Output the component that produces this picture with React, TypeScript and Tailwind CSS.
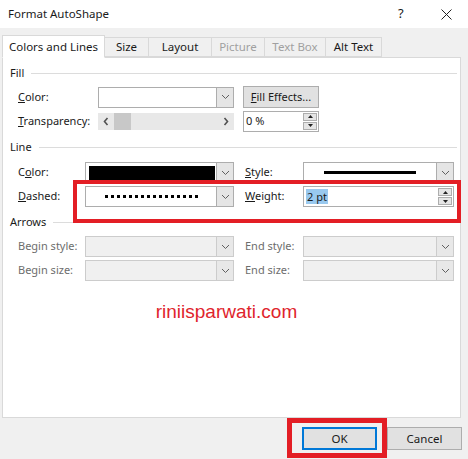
import React from 'react'

const font = { fontFamily: '"Noto Sans", "Open Sans", sans-serif' }

const Chevron = () => (
    <svg width="9" height="6" viewBox="0 0 9 6" fill="none">
        <path d="M1 1l3.5 3.5L8 1" stroke="#606060" strokeWidth="1" />
    </svg>
)

const Combo = ({ width, disabled, children }: { width: string; disabled?: boolean; children?: React.ReactNode }) => (
    <div className={`${width} h-[21px] flex border ${disabled ? 'border-[#cccccc] bg-[#f0f0f0]' : 'border-[#adadad] bg-white'}`}>
        <div className="flex-1 flex items-center">{children}</div>
        <div className={`w-[17px] flex items-center justify-center border-l ${disabled ? 'border-[#cccccc] bg-[#e8e8e8]' : 'border-[#adadad] bg-[#e5e5e5]'}`}>
            <Chevron />
        </div>
    </div>
)

const Spinner = ({ width, children }: { width: string; children: React.ReactNode }) => (
    <div className={`${width} h-[21px] flex border border-[#adadad] bg-white`}>
        <div className="flex-1 flex items-center pl-[2px]">{children}</div>
        <div className="w-[15px] flex flex-col justify-center gap-[1px] pr-[1px]">
            <div className="h-[8px] bg-[#e5e5e5] border border-[#adadad] flex items-center justify-center">
                <svg width="5" height="3" viewBox="0 0 5 3"><path d="M0 3L2.5 0L5 3z" fill="#222" /></svg>
            </div>
            <div className="h-[8px] bg-[#e5e5e5] border border-[#adadad] flex items-center justify-center">
                <svg width="5" height="3" viewBox="0 0 5 3"><path d="M0 0L2.5 3L5 0z" fill="#222" /></svg>
            </div>
        </div>
    </div>
)

const Heading = ({ text }: { text: string }) => (
    <div className="flex items-center h-[16px] pl-[7px] pr-[3px]">
        <span className="text-[#1a1a1a]">{text}</span>
        <div className="flex-1 h-px bg-[#dcdcdc] ml-[7px]" />
    </div>
)

const Tab = ({ label, active, disabled, width }: { label: string; active?: boolean; disabled?: boolean; width: string }) => (
    <div
        className={`${width} flex items-center justify-center border border-[#d9d9d9] ${active ? 'h-[23px] bg-white border-b-white -mb-px z-10' : 'h-[20px] bg-[#f0f0f0] -ml-px'} ${disabled ? 'text-[#a0a0a0]' : 'text-[#1a1a1a]'}`}
    >
        {label}
    </div>
)

export default function App() {
    return (
        <div className="w-[468px] h-[459px] bg-[#f0f0f0] flex flex-col text-[11px] text-[#1a1a1a] relative overflow-hidden" style={font}>
            <div className="h-[28px] bg-white flex items-center pl-[8px] text-[11.5px]">
                <span className="flex-1">Format AutoShape</span>
                <span className="w-[12px] text-[13px] mr-[31px]">?</span>
                <svg width="11" height="11" viewBox="0 0 11 11" className="mr-[16px]">
                    <path d="M0.5 0.5l10 10M10.5 0.5l-10 10" stroke="#222" strokeWidth="1" />
                </svg>
            </div>

            <div className="pl-[2px] pt-[7px]">
                <div className="flex items-end relative text-[11.5px]">
                    <Tab label="Colors and Lines" active width="w-[103px]" />
                    <Tab label="Size" width="w-[45px]" />
                    <Tab label="Layout" width="w-[64px]" />
                    <Tab label="Picture" disabled width="w-[54px]" />
                    <Tab label="Text Box" disabled width="w-[62px]" />
                    <Tab label="Alt Text" width="w-[57px]" />
                </div>
                <div className="w-[459px] h-[361px] bg-white border border-[#d9d9d9] pt-[7px] flex flex-col">
                    <Heading text="Fill" />
                    <div className="flex items-center mt-[5px] h-[22px]">
                        <span className="w-[95px] pl-[15px]"><u>C</u>olor:</span>
                        <Combo width="w-[136px]" />
                        <button className="ml-[9px] w-[76px] h-[22px] bg-[#e1e1e1] border border-[#adadad] flex items-center justify-center">
                            <span><u>F</u>ill Effects...</span>
                        </button>
                    </div>
                    <div className="flex items-center mt-[3px] h-[20px]">
                        <span className="w-[95px] pl-[15px]"><u>T</u>ransparency:</span>
                        <div className="w-[136px] h-[17px] bg-[#e8e8e8] flex items-center">
                            <svg width="16" height="17" viewBox="0 0 16 17"><path d="M9.5 5l-3 3.5 3 3.5" stroke="#505050" strokeWidth="1.6" fill="none" /></svg>
                            <div className="w-[17px] h-[17px] bg-[#c8c8c8]" />
                            <div className="flex-1" />
                            <svg width="16" height="17" viewBox="0 0 16 17"><path d="M6.5 5l3 3.5-3 3.5" stroke="#505050" strokeWidth="1.6" fill="none" /></svg>
                        </div>
                        <div className="ml-[9px]">
                            <Spinner width="w-[76px]">0 %</Spinner>
                        </div>
                    </div>

                    <div className="mt-[8px]">
                        <Heading text="Line" />
                    </div>
                    <div className="flex items-center mt-[7px] h-[21px]">
                        <span className="w-[82px] pl-[15px]">C<u>o</u>lor:</span>
                        <Combo width="w-[149px]">
                            <div className="ml-[3px] w-[126px] h-[14px] bg-black" />
                        </Combo>
                        <span className="w-[69px] pl-[11px]"><u>S</u>tyle:</span>
                        <Combo width="w-[151px]">
                            <div className="ml-[20px] w-[92px] h-[3px] bg-black" />
                        </Combo>
                    </div>
                    <div className="flex items-center mt-[3px] h-[21px]">
                        <span className="w-[82px] pl-[15px]"><u>D</u>ashed:</span>
                        <Combo width="w-[149px]">
                            <div className="ml-[19px] w-[94px] h-[3px] bg-[repeating-linear-gradient(90deg,#000_0px,#000_3px,transparent_3px,transparent_6px)]" />
                        </Combo>
                        <span className="w-[69px] pl-[11px]"><u>W</u>eight:</span>
                        <Spinner width="w-[151px]">
                            <span className="bg-[#99c9ef] px-px leading-[15px]">2 pt</span>
                        </Spinner>
                    </div>

                    <div className="mt-[7px]">
                        <Heading text="Arrows" />
                    </div>
                    <div className="flex items-center mt-[6px] h-[21px] text-[#6d6d6d]">
                        <span className="w-[82px] pl-[15px]">Begin style:</span>
                        <Combo width="w-[149px]" disabled />
                        <span className="w-[69px] pl-[11px]">End style:</span>
                        <Combo width="w-[151px]" disabled />
                    </div>
                    <div className="flex items-center mt-[3px] h-[21px] text-[#6d6d6d]">
                        <span className="w-[82px] pl-[15px]">Begin size:</span>
                        <Combo width="w-[149px]" disabled />
                        <span className="w-[69px] pl-[11px]">End size:</span>
                        <Combo width="w-[151px]" disabled />
                    </div>

                    <div className="mt-[17px] pr-[10px] text-center text-[19px] text-[#e0242c]" style={{ fontFamily: '"Liberation Sans", Arial, sans-serif' }}>
                        riniisparwati.com
                    </div>
                </div>
            </div>

            <div className="flex justify-end gap-[10px] pr-[6px] mt-[9px] text-[11.5px]">
                <button className="w-[75px] h-[23px] bg-[#e1e1e1] border-2 border-[#0078d7] flex items-center justify-center">OK</button>
                <button className="w-[75px] h-[23px] bg-[#e1e1e1] border border-[#adadad] flex items-center justify-center">Cancel</button>
            </div>

            {/* red annotation boxes */}
            <div className="absolute left-[73px] top-[180px] w-[388px] h-[43px] border-[4px] border-[#e31e25]" />
            <div className="absolute left-[287px] top-[418px] w-[100px] h-[40px] border-[5px] border-[#e31e25]" />
        </div>
    )
}
